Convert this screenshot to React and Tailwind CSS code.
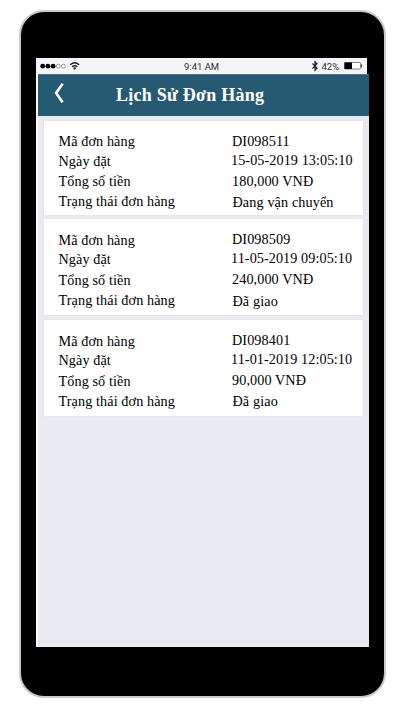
import React from 'react';

const orders = [
  {
    card: 'h-[94px]',
    labelPad: 'pt-[10px]',
    valuePad: 'pt-[10px]',
    labelRows: ['h-5', 'h-5', 'h-5', 'h-5'],
    valueRows: ['h-[19px]', 'h-[21px]', 'h-[21px]', 'h-5'],
    values: ['DI098511', '15-05-2019 13:05:10', '180,000 VNĐ', 'Đang vận chuyển'],
  },
  {
    card: 'h-[96px] mt-1',
    labelPad: 'pt-[11px]',
    valuePad: 'pt-[10px]',
    labelRows: ['h-[19px]', 'h-[21px]', 'h-5', 'h-5'],
    valueRows: ['h-[19px]', 'h-[21px]', 'h-[22px]', 'h-5'],
    values: ['DI098509', '11-05-2019 09:05:10', '240,000 VNĐ', 'Đã giao'],
  },
  {
    card: 'h-[96px] mt-[5px]',
    labelPad: 'pt-[11px]',
    valuePad: 'pt-[10px]',
    labelRows: ['h-[19px]', 'h-[21px]', 'h-5', 'h-5'],
    valueRows: ['h-[19px]', 'h-[21px]', 'h-[21px]', 'h-5'],
    values: ['DI098401', '11-01-2019 12:05:10', '90,000 VNĐ', 'Đã giao'],
  },
];

const labels = ['Mã đơn hàng', 'Ngày đặt', 'Tổng số tiền', 'Trạng thái đơn hàng'];
const valueStyles = [
  'pl-[0.5px] tracking-[0.1px]',
  '-ml-[0.5px] tracking-[0.08px]',
  'pl-[0.5px] tracking-[0.1px]',
  'pl-[1px] tracking-[0.12px]',
];

function StatusBar() {
  return (
    <div className="flex h-4 w-[331px] items-center bg-[#f4f5fa] pl-1 font-['Roboto','Liberation_Sans',sans-serif] text-[10px] text-[#303030]">
      <svg className="h-4 w-[42px] shrink-0" viewBox="0 0 42 16">
        <g fill="#000">
          <circle cx="2.7" cy="8.2" r="2.4" />
          <circle cx="7.9" cy="8.2" r="2.4" />
          <circle cx="13.1" cy="8.2" r="2.4" />
        </g>
        <g fill="none" stroke="#777" strokeWidth="0.7">
          <circle cx="18.3" cy="8.2" r="2" />
          <circle cx="23.4" cy="8.2" r="2" />
        </g>
        <g fill="none" stroke="#222" strokeWidth="1.4">
          <path d="M30.3 6.8Q34.7 2.8 39.1 6.8" />
          <path d="M32.1 8.8Q34.7 6.5 37.3 8.8" />
        </g>
        <path d="M33 9.9Q34.7 8.7 36.4 9.9L34.7 11.7Z" fill="#222" />
      </svg>
      <span className="ml-[102px] w-[36px] whitespace-nowrap pt-px text-[9.5px] leading-4">9:41 AM</span>
      <svg className="ml-[92px] h-4 w-[6px] shrink-0" viewBox="0 0 6 16" fill="none" stroke="#222" strokeWidth="1.2">
        <path d="M0.5 5.5L5 10.2L3 12.2V3.8L5 5.8L0.5 10.5" />
      </svg>
      <span className="ml-[3.5px] w-[19px] whitespace-nowrap pt-px text-[9.5px] leading-4">42%</span>
      <svg className="ml-[2.5px] h-4 w-[20px] shrink-0" viewBox="0 0 20 16">
        <rect x="1.5" y="4.5" width="16" height="6.5" rx="0.7" fill="#fff" stroke="#777" strokeWidth="0.9" />
        <rect x="1.5" y="4.5" width="7.5" height="6.5" fill="#000" />
        <rect x="18" y="6.5" width="1" height="2.5" fill="#333" />
      </svg>
    </div>
  );
}

function OrderCard({ order }) {
  return (
    <section className={`flex w-[319px] bg-white pl-[14.5px] text-[14.2px] leading-5 text-black shadow-[0_0_0_1px_#e7e5e9] ${order.card}`}>
      <div className={`w-[173px] tracking-[0.1px] ${order.labelPad}`}>
        {labels.map((label, i) => (
          <div key={label} className={`whitespace-nowrap ${order.labelRows[i]}`}>{label}</div>
        ))}
      </div>
      <div className={order.valuePad}>
        {order.values.map((value, i) => (
          <div key={i} className={`whitespace-nowrap ${order.valueRows[i]} ${valueStyles[i]}`}>{value}</div>
        ))}
      </div>
    </section>
  );
}

export default function App() {
  return (
    <div className="h-[715px] w-[405px] overflow-hidden bg-white pl-[19px] pt-[10px] font-['Liberation_Serif',serif]">
      <div className="h-[688px] w-[367px] rounded-[25px] border-2 border-[#c9c9c9] bg-black pl-[15px] pt-[46px]">
        <div className="flex h-[589px] w-[333px] flex-col">
          <StatusBar />
          <div className="flex-1 border-l-2 border-white bg-[#e9eaf0]">
            <header className="flex h-[42px] items-start border-t border-[#54798d] bg-[#265a72]">
              <svg className="ml-4 mt-[7px] h-6 w-3" viewBox="0 0 12 24" fill="none" stroke="#fff" strokeWidth="2.6">
                <path d="M8.6 1.8L2.1 11L8.6 20.2" />
              </svg>
              <h1 className="ml-[50px] mt-[10px] whitespace-nowrap text-[18px] font-bold leading-5 tracking-[0.25px] text-white">Lịch Sử Đơn Hàng</h1>
            </header>
            <main className="pl-1.5 pt-[5px]">
              {orders.map((order) => (
                <OrderCard key={order.values[0]} order={order} />
              ))}
            </main>
          </div>
        </div>
      </div>
    </div>
  );
}
